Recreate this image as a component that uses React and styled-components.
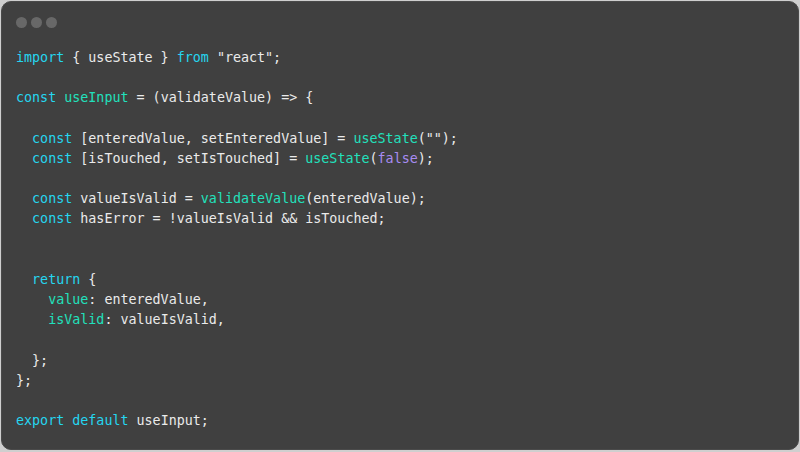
import React from "react";
import styled, { createGlobalStyle } from "styled-components";

const GlobalStyle = createGlobalStyle`
  html, body {
    margin: 0;
    padding: 0;
    background: #cfcfcf;
  }
`;

const Window = styled.div`
  box-sizing: border-box;
  margin: 1px 1px 0 1px;
  height: 449px;
  background: #404040;
  border: 1px solid #4a4a4a;
  border-radius: 10px;
  display: flex;
  flex-direction: column;
  overflow: hidden;
`;

const TitleBar = styled.div`
  display: flex;
  gap: 4px;
  padding: 15px 0 0 14px;
  height: 31px;
  box-sizing: border-box;
`;

const Dot = styled.span`
  width: 11px;
  height: 11px;
  border-radius: 50%;
  background: #686868;
`;

const Code = styled.pre`
  margin: 0;
  padding: 15px 0 0 14px;
  font-family: "DejaVu Sans Mono", "Liberation Mono", monospace;
  font-size: 13.35px;
  line-height: 20.17px;
  color: #ebebeb;
  white-space: pre;
`;

const colors = {
  kw: "#25d6f0",
  fn: "#22e0bd",
  lit: "#a88cf2",
};

const Tok = styled.span`
  color: ${(p) => colors[p.$k] || "#ebebeb"};
`;

const K = ({ children }) => <Tok $k="kw">{children}</Tok>;
const F = ({ children }) => <Tok $k="fn">{children}</Tok>;
const L = ({ children }) => <Tok $k="lit">{children}</Tok>;

export default function App() {
  return (
    <>
      <GlobalStyle />
      <Window>
        <TitleBar>
          <Dot />
          <Dot />
          <Dot />
        </TitleBar>
        <Code>
          <K>import</K> {"{ useState } "}<K>from</K> {'"react";'}
          {"\n\n"}
          <K>const</K> <F>useInput</F> {"= (validateValue) => {"}
          {"\n\n"}
          {"  "}<K>const</K> {"[enteredValue, setEnteredValue] = "}<F>useState</F>{'("");'}
          {"\n"}
          {"  "}<K>const</K> {"[isTouched, setIsTouched] = "}<F>useState</F>{"("}<L>false</L>{");"}
          {"\n\n"}
          {"  "}<K>const</K> {"valueIsValid = "}<F>validateValue</F>{"(enteredValue);"}
          {"\n"}
          {"  "}<K>const</K> {"hasError = !valueIsValid && isTouched;"}
          {"\n\n\n"}
          {"  "}<K>return</K> {"{"}
          {"\n"}
          {"    "}<F>value</F>{": enteredValue,"}
          {"\n"}
          {"    "}<F>isValid</F>{": valueIsValid,"}
          {"\n\n"}
          {"  };"}
          {"\n"}
          {"};"}
          {"\n\n"}
          <K>export</K> <K>default</K> {"useInput;"}
        </Code>
      </Window>
    </>
  );
}
